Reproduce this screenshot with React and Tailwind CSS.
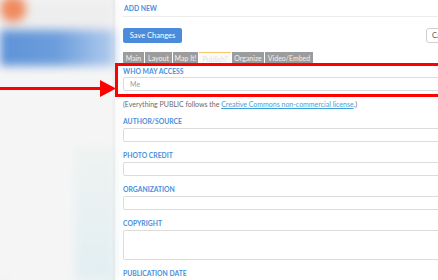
import React from 'react';

const tabs = [
  { name: 'Main', w: 'w-[21px]' },
  { name: 'Layout', w: 'w-[27px]' },
  { name: 'Map It!', w: 'w-[25px]' },
  { name: 'Publish?', w: 'w-[32px]', active: true },
  { name: 'Organize', w: 'w-[32px]' },
  { name: 'Video/Embed', w: 'w-[48px]' },
];

const Label = ({ children }) => (
  <div className="h-[10px] leading-[10px] text-[6.8px] font-bold text-[#4a8fdc] uppercase">{children}</div>
);

const Field = ({ label, tall }) => (
  <div className="flex flex-col gap-[2px]">
    <Label>{label}</Label>
    <div className={`${tall ? 'h-[30px]' : 'h-[14px]'} w-full border border-[#dcdcdc] rounded-[2px] bg-white`} />
  </div>
);

export default function App() {
  return (
    <div className="relative w-[438px] h-[280px] overflow-hidden bg-[#f3f3f3] font-['Lato',sans-serif] flex">
      {/* blurred page behind the panel */}
      <div className="w-[115px] shrink-0 flex flex-col blur-[5px]">
        <div className="h-[30px] bg-[#eeeeee] flex">
          <div className="w-[26px] h-[26px] -mt-[4px] rounded-full bg-[#ef8a5e]" />
        </div>
        <div className="h-[36px] bg-gradient-to-r from-[#5f93d8] via-[#6c9edc] to-[#b4cdee]" />
        <div className="flex-1 flex bg-[#f5f5f5]">
          <div className="flex-1" />
          <div className="w-[40px] mt-[80px] bg-gradient-to-b from-[#eef3f2] to-[#e2eef2]" />
        </div>
      </div>

      {/* edit panel */}
      <div className="w-[360px] shrink-0 h-[300px] bg-white shadow-[-2px_0_4px_rgba(0,0,0,0.08)] px-[8px] flex flex-col">
        <div className="h-[17px] border-b border-[#ececec] pl-[1px] flex items-center text-[6.8px] font-bold text-[#4a8fdc] uppercase">Add New</div>

        <div className="flex items-center justify-between mt-[11px]">
          <button className="w-[59px] h-[15px] rounded-[2px] bg-[#4a8cdb] text-white text-[7.5px] leading-[15px] text-center">Save Changes</button>
          <button className="w-[41px] h-[15px] rounded-[3px] border border-[#d0d0d0] bg-white text-[#555] text-[7.5px] text-left pl-[5px]">Cancel</button>
        </div>

        <div className="flex gap-[1px] mt-[9px] h-[12px]">
          {tabs.map(t => (
            <div
              key={t.name}
              className={`${t.w} h-[12px] text-[7px] leading-[12px] text-center whitespace-nowrap ${t.active ? 'bg-[#fafafa] text-[#e2e2e2] border-t border-[#f7c66b]' : 'bg-[#9c9c9c] text-[#f2f2f2]'}`}
            >
              {t.name}
            </div>
          ))}
        </div>

        <div className="mt-[2px] flex flex-col gap-[1px]">
          <Label>Who may access</Label>
          <div className="h-[14px] w-full border border-[#dcdcdc] rounded-[2px] pl-[6px] text-[7px] leading-[12px] text-[#9a9a9a]">Me</div>
        </div>

        <div className="mt-[8px] h-[10px] leading-[10px] text-[7px] text-[#6a6a6a] whitespace-nowrap">
          (Everything PUBLIC follows the <span className="text-[#3fa0d8] underline">Creative Commons non-commercial license</span>.)
        </div>

        <div className="mt-[7px] flex flex-col gap-[8px]">
          <Field label="Author/Source" />
          <Field label="Photo Credit" />
          <Field label="Organization" />
          <Field label="Copyright" tall />
          <Field label="Publication Date" />
        </div>
      </div>

      {/* annotation drawn over the screenshot */}
      <div className="absolute left-[115px] top-[63px] w-[340px] h-[34px] border-[3px] border-[#ff0000]" />
      <div className="absolute left-0 top-[87px] w-[102px] h-[3px] bg-[#ff0000]" />
      <svg className="absolute left-[100px] top-[80px]" width="16" height="17" viewBox="0 0 16 17">
        <polygon points="0,0 16,8.5 0,17" fill="#ff0000" />
      </svg>
    </div>
  );
}
